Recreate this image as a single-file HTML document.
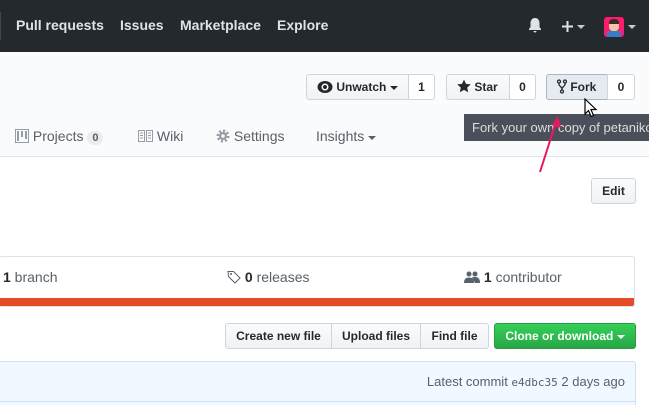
<!DOCTYPE html>
<html><head><style>
*{margin:0;padding:0;box-sizing:border-box}
html,body{width:649px;height:405px;overflow:hidden}
body{background:#fff;font-family:"Liberation Sans",Arial,sans-serif;position:relative;color:#24292e}
.hdr{position:absolute;left:0;top:0;width:649px;height:52px;background:#24292e}
.hdr .n{position:absolute;top:17px;font-size:14px;font-weight:bold;color:#e0e2e4}
.sub{position:absolute;left:0;top:52px;width:649px;height:105px;background:#fafbfc;border-bottom:1px solid #e1e4e8}
.btn{position:absolute;height:26px;border:1px solid #d1d5da;background:linear-gradient(#fafbfc,#eff3f6);font-size:12px;font-weight:bold;line-height:24px;color:#24292e;border-radius:3px}
.cnt{position:absolute;height:26px;border:1px solid #d1d5da;background:#fff;font-size:12px;font-weight:bold;line-height:24px;text-align:center;border-radius:0 3px 3px 0}
.tab{position:absolute;top:128px;font-size:14px;color:#586069}
.stats{position:absolute;left:-2px;top:256px;width:637px;height:51px;border:1px solid #dfe2e5;border-radius:3px;background:#fff;overflow:hidden}
.stats span{position:absolute;top:12px;font-size:14px;color:#586069}
.stats b{color:#24292e}
</style></head><body>
<div class="hdr">
 <div style="position:absolute;left:0;top:12px;width:1px;height:28px;background:#444"></div>
 <span class="n" style="left:16px">Pull requests</span>
 <span class="n" style="left:120px">Issues</span>
 <span class="n" style="left:180px">Marketplace</span>
 <span class="n" style="left:277px">Explore</span>
 <svg style="position:absolute;left:528px;top:17px" width="14" height="16" viewBox="0 0 14 16"><path d="M7 1c-3 0-4.5 2.5-4.5 5v4L1 12v1h12v-1l-1.5-2V6C11.5 3.5 10 1 7 1z M5.5 14h3a1.5 1.5 0 0 1-3 0z" fill="#dfe1e3"/></svg>
 <svg style="position:absolute;left:561px;top:20px" width="13" height="13"><path d="M6.5 1v11M1 6.5h11" stroke="#e0e2e4" stroke-width="2"/></svg>
 <svg style="position:absolute;left:577px;top:25px" width="8" height="5"><path d="M0 0h8L4 4z" fill="#ccc"/></svg>
 <div style="position:absolute;left:604px;top:17px;width:20px;height:20px;background:#ff1a6e;border-radius:3px;overflow:hidden"><div style="position:absolute;left:5px;top:2px;width:10px;height:12px;background:#f0c8a8;border-radius:4px;border-top:5px solid #3a2e28"></div><div style="position:absolute;left:3px;top:14px;width:14px;height:6px;background:#3a7ac8"></div></div>
 <svg style="position:absolute;left:628px;top:25px" width="8" height="5"><path d="M0 0h8L4 4z" fill="#ccc"/></svg>
</div>
<div class="sub"></div>
<div class="btn" style="left:306px;top:74px;width:103px;border-radius:3px 0 0 3px;padding-left:10px">
 <svg style="vertical-align:-3px" width="16" height="14" viewBox="0 0 16 14"><ellipse cx="8" cy="7" rx="7.5" ry="6" fill="#24292e"/><circle cx="8" cy="7" r="3.5" fill="#fff"/><circle cx="8" cy="7" r="2" fill="#24292e"/></svg> Unwatch <svg width="8" height="5"><path d="M0 0h8L4 4z" fill="#24292e"/></svg></div>
<div class="cnt" style="left:408px;top:74px;width:27px">1</div>
<div class="btn" style="left:446px;top:74px;width:64px;border-radius:3px 0 0 3px;padding-left:10px">
 <svg style="vertical-align:-2px" width="14" height="14" viewBox="0 0 14 14"><path d="M7 0.5l2 4.4 4.8.5-3.6 3.2 1 4.7L7 10.9 2.8 13.3l1-4.7L.2 5.4 5 4.9z" fill="#24292e"/></svg> Star</div>
<div class="cnt" style="left:509px;top:74px;width:27px">0</div>
<div class="btn" style="left:546px;top:74px;width:62px;border-radius:3px 0 0 3px;padding-left:10px;background:#e6ebf1;border-color:#adb5bd">
 <svg style="vertical-align:-3px" width="10" height="15" viewBox="0 0 10 15"><circle cx="2" cy="2.5" r="1.5" fill="none" stroke="#24292e" stroke-width="1.3"/><circle cx="8" cy="2.5" r="1.5" fill="none" stroke="#24292e" stroke-width="1.3"/><circle cx="5" cy="12.5" r="1.5" fill="none" stroke="#24292e" stroke-width="1.3"/><path d="M2 4v1.5c0 1.5 3 2.5 3 4.5v1M8 4v1.5c0 1.5-3 2.5-3 4.5" fill="none" stroke="#24292e" stroke-width="1.3"/></svg> Fork</div>
<div class="cnt" style="left:607px;top:74px;width:28px">0</div>
<div style="position:absolute;left:464px;top:114px;width:190px;height:27px;background:#4b4f59;color:#dcdde0;font-size:13px;line-height:27px;padding-left:8px;white-space:nowrap;overflow:hidden">Fork your own copy of petanikod</div>
<svg style="position:absolute;left:584px;top:98px" width="14" height="20" viewBox="0 0 14 20"><path d="M1 1v15l3.5-3.5 2.5 6 2.5-1-2.5-6H12z" fill="#fff" stroke="#000" stroke-width="1.2"/></svg>
<svg style="position:absolute;left:534px;top:112px" width="30" height="64"><path d="M6 60L22 10" stroke="#e6195f" stroke-width="2"/><path d="M24 4l3 12-9-3z" fill="#e6195f"/></svg>
<div class="tab" style="left:15px"><svg style="vertical-align:-2px" width="14" height="14"><rect x="0.5" y="0.5" width="13" height="13" fill="none" stroke="#959da5"/><path d="M3 2v10M7 2v6M11 2v8" stroke="#959da5" stroke-width="2"/></svg> Projects <span style="display:inline-block;background:#eaecef;border-radius:9px;font-size:11px;font-weight:bold;padding:1px 5px;color:#586069">0</span></div>
<div class="tab" style="left:138px"><svg style="vertical-align:-1px" width="15" height="12"><path d="M.5.5h6v11h-6zM8.5.5h6v11h-6zM2 3h3M2 5.5h3M2 8h3M10 3h3M10 5.5h3M10 8h3" fill="none" stroke="#959da5"/></svg> Wiki</div>
<div class="tab" style="left:216px"><svg style="vertical-align:-2px" width="14" height="14"><circle cx="7" cy="7" r="5" fill="none" stroke="#959da5" stroke-width="3" stroke-dasharray="2 1.9"/><circle cx="7" cy="7" r="4" fill="#959da5"/><circle cx="7" cy="7" r="1.8" fill="#fafbfc"/></svg> Settings</div>
<div class="tab" style="left:316px">Insights <svg width="8" height="5"><path d="M0 0h8L4 4z" fill="#586069"/></svg></div>
<div class="btn" style="left:591px;top:178px;width:45px;text-align:center">Edit</div>
<div class="stats">
 <span style="left:4px"><b>1</b> branch</span>
 <span style="left:228px"><svg style="vertical-align:-2px" width="14" height="14"><path d="M1 1.5h5.5l6.5 6.5-5 5L1.5 6.5z" fill="none" stroke="#586069"/><circle cx="4" cy="4" r="1" fill="#586069"/></svg> <b>0</b> releases</span>
 <span style="left:465px"><svg style="vertical-align:-1px" width="16" height="12"><circle cx="5" cy="3" r="2.5" fill="#586069"/><path d="M0 12c0-4 2-5.5 5-5.5s5 1.5 5 5.5z" fill="#586069"/><circle cx="11" cy="3" r="2.5" fill="#586069"/><path d="M8 6.5c1-.5 2-.5 3-.5 3 0 5 1.5 5 6h-5z" fill="#586069"/></svg> <b>1</b> contributor</span>
 <div style="position:absolute;left:0;bottom:0;width:100%;height:8px;background:#e34c26"></div>
</div>
<div class="btn" style="left:225px;top:323px;width:107px;border-radius:3px 0 0 3px;text-align:center">Create new file</div>
<div class="btn" style="left:331px;top:323px;width:90px;border-radius:0;text-align:center">Upload files</div>
<div class="btn" style="left:420px;top:323px;width:69px;border-radius:0 3px 3px 0;text-align:center">Find file</div>
<div class="btn" style="left:494px;top:323px;width:142px;text-align:center;background:linear-gradient(#34d058,#28a745);border-color:#2a9a45;color:#fff">Clone or download <svg width="8" height="5"><path d="M0 0h8L4 4z" fill="#fff"/></svg></div>
<div style="position:absolute;left:-2px;top:361px;width:638px;height:44px;background:#f1f8ff;border:1px solid #c8e1ff;border-bottom:none;border-radius:3px 3px 0 0"></div>
<div style="position:absolute;left:0;top:401px;width:636px;height:1px;background:#c8e1ff"></div>
<div style="position:absolute;right:24px;top:374px;font-size:13px;color:#586069">Latest commit <span style="font-family:'DejaVu Sans Mono',monospace;font-size:11px">e4dbc35</span> 2 days ago</div>
</body></html>
